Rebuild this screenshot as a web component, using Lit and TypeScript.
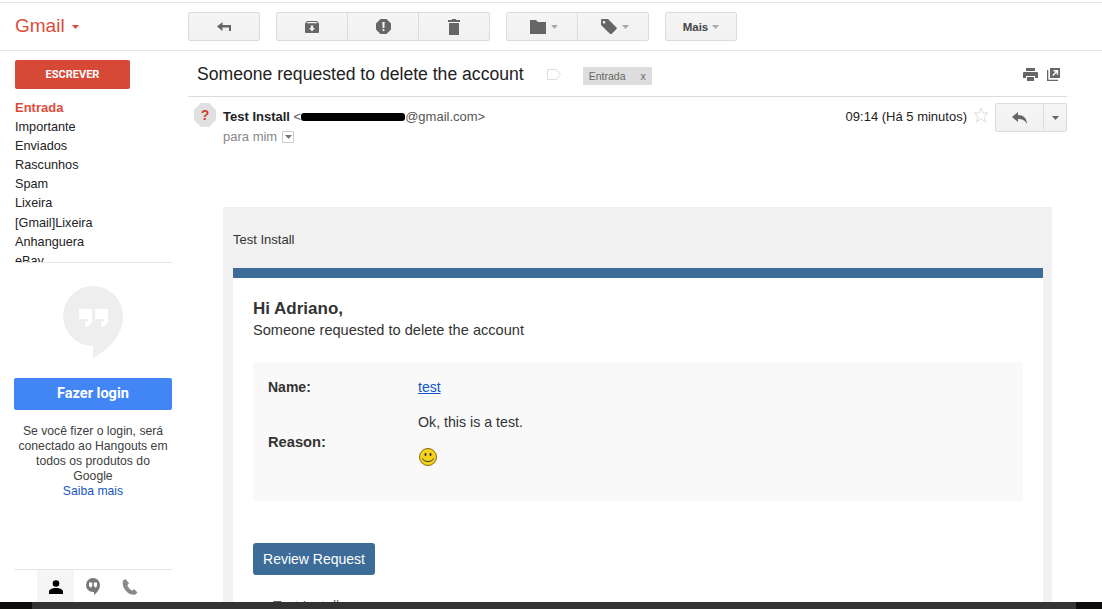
import { LitElement, html, css, svg } from 'lit';
import { customElement } from 'lit/decorators.js';

const caret = svg`<svg class="caret" width="7" height="4" viewBox="0 0 7 4"><path d="M0 0h7L3.5 4z" fill="currentColor"/></svg>`;

@customElement('app-root')
export class AppRoot extends LitElement {
  static styles = css`
    :host {
      display: block;
      width: 1102px;
      height: 609px;
      overflow: hidden;
      background: #fff;
      font-family: 'Liberation Sans', Arial, sans-serif;
      color: #222;
    }
    .page {
      height: 602px;
      box-sizing: border-box;
      padding-top: 2px;
      display: flex;
      flex-direction: column;
      overflow: hidden;
    }
    .strip {
      height: 7px;
      background: #333;
      display: flex;
      justify-content: space-between;
    }
    .strip i {
      background: #0c0c0a;
      width: 32px;
    }
    .strip i:last-child {
      width: 26px;
    }

    /* toolbar */
    .toolbar {
      height: 49px;
      flex: none;
      box-sizing: border-box;
      display: flex;
      align-items: flex-start;
      border-top: 1px solid #e5e5e5;
      border-bottom: 1px solid #e5e5e5;
    }
    .logo {
      width: 188px;
      padding: 11px 0 0 15px;
      box-sizing: border-box;
      color: #dd4b39;
      font-size: 19px;
      line-height: 24px;
      display: flex;
      align-items: center;
      gap: 7px;
    }
    .logo .caret {
      margin-top: 2px;
    }
    .tools {
      display: flex;
      gap: 16px;
      padding-top: 9px;
    }
    .group {
      display: flex;
      height: 29px;
      box-sizing: border-box;
      border: 1px solid #dcdcdc;
      border-radius: 2px;
      background: linear-gradient(#f5f5f5, #f1f1f1);
      color: #666;
    }
    .btn {
      display: flex;
      align-items: center;
      justify-content: center;
      gap: 5px;
      box-sizing: border-box;
      width: 71px;
      border-right: 1px solid #dcdcdc;
    }
    .btn:last-child {
      border-right: 0;
      width: 70px;
    }
    .btn .caret {
      color: #aaa;
    }
    .btn.menu {
      padding-left: 4px;
    }
    .more {
      font-size: 11.5px;
      font-weight: bold;
      color: #444;
      gap: 4px;
    }

    .body {
      flex: 1;
      min-height: 0;
      display: flex;
    }

    /* left column */
    .side {
      width: 188px;
      flex: none;
      box-sizing: border-box;
      display: flex;
      flex-direction: column;
    }
    .compose {
      margin: 9px 0 0 15px;
      width: 115px;
      height: 29px;
      border-radius: 2px;
      background: #d64937;
      color: #fff;
      font-size: 11px;
      font-weight: bold;
      font-family: Roboto, 'Liberation Sans', sans-serif;
      display: flex;
      align-items: center;
      justify-content: center;
    }
    .labels {
      margin: 9px 16px 0 15px;
      padding-top: 0.4px;
      height: 163.6px;
      overflow: hidden;
      border-bottom: 1px solid #e5e5e5;
      font-size: 12.7px;
      line-height: 19.2px;
      color: #222;
    }
    .labels div.on {
      color: #dd4b39;
      font-weight: bold;
      font-size: 13px;
    }
    .hang {
      display: flex;
      flex-direction: column;
      align-items: stretch;
      margin: 0 16px 0 14px;
      flex: 1;
      min-height: 0;
    }
    .bubble {
      align-self: center;
      margin-top: 23px;
    }
    .login {
      margin-top: 20px;
      height: 32px;
      background: #4285f4;
      color: #fff;
      font-size: 14.5px;
      font-weight: bold;
      border-radius: 2px;
      display: flex;
      align-items: center;
      justify-content: center;
      font-family: Roboto, 'Liberation Sans', sans-serif;
    }
    .hint {
      margin-top: 14px;
      font-size: 12.2px;
      line-height: 15px;
      text-align: center;
      color: #404040;
    }
    .hint a {
      color: #1a56c4;
      display: block;
    }
    .tabs {
      margin-top: auto;
      height: 33px;
      box-sizing: border-box;
      border-top: 1px solid #e5e5e5;
      display: flex;
      padding-left: 23px;
    }
    .tabs span {
      width: 37px;
      display: flex;
      align-items: center;
      justify-content: center;
      padding-top: 1px;
    }
    .tabs span.on {
      background: #f5f5f5;
    }

    /* message */
    .main {
      flex: 1;
      min-width: 0;
      padding-right: 35px;
    }
    .subject {
      height: 46px;
      box-sizing: border-box;
      border-bottom: 1px solid #dcdcdc;
      display: flex;
      align-items: center;
      padding: 2px 7px 0 9px;
      font-size: 17.6px;
      color: #222;
    }
    .tag {
      margin-left: 23px;
      color: #ddd;
      display: flex;
    }
    .chip {
      margin: 2px 0 0 22px;
      width: 69px;
      height: 18px;
      box-sizing: border-box;
      padding: 0 6px;
      background: #ddd;
      color: #666;
      font-size: 10.5px;
      display: flex;
      align-items: center;
      justify-content: space-between;
    }
    .subject-icons {
      margin-left: auto;
      display: flex;
      gap: 9px;
      color: #666;
    }
    .head {
      display: flex;
      height: 110px;
      box-sizing: border-box;
      padding: 6px 0 0 6px;
    }
    .avatar {
      width: 22px;
      height: 24px;
      flex: none;
      display: flex;
      justify-content: center;
    }
    .who {
      margin-left: 7px;
      font-size: 13px;
      color: #555;
      line-height: 16px;
      padding-top: 6px;
    }
    .who b {
      color: #222;
    }
    .mask {
      display: inline-block;
      width: 104px;
      height: 8px;
      background: #000;
      border-radius: 3px;
      vertical-align: 0;
    }
    .to {
      color: #888;
      margin-top: 4px;
      display: flex;
      align-items: center;
      gap: 5px;
    }
    .arrow {
      width: 12px;
      height: 12px;
      box-sizing: border-box;
      border: 1px solid #ccc;
      border-radius: 1px;
      display: flex;
      align-items: center;
      justify-content: center;
      color: #777;
    }
    .when {
      margin-left: auto;
      display: flex;
      gap: 6px;
      font-size: 13px;
      line-height: 16px;
      color: #222;
    }
    .when > span {
      padding-top: 6px;
    }
    .star {
      margin-top: 4px;
    }
    .reply {
      display: flex;
      height: 29px;
      box-sizing: border-box;
      border: 1px solid #dcdcdc;
      border-radius: 2px;
      background: linear-gradient(#f5f5f5, #f1f1f1);
      color: #666;
    }
    .reply > div {
      display: flex;
      align-items: center;
      justify-content: center;
    }
    .reply .a {
      box-sizing: border-box;
      width: 48px;
      border-right: 1px solid #dcdcdc;
    }
    .reply .b {
      width: 22px;
    }

    /* mail body */
    .mail {
      margin: 0 15px 0 35px;
      background: #f1f1f1;
      padding: 0 9px 0 10px;
      height: 400px;
    }
    .brand {
      height: 61px;
      box-sizing: border-box;
      padding-top: 25px;
      font-size: 13px;
      line-height: 15px;
      color: #333;
    }
    .card {
      background: #fff;
      border-top: 10px solid #3d6c99;
      padding: 20px;
      height: 400px;
      color: #333;
      font-size: 14px;
      line-height: 20px;
      box-sizing: border-box;
    }
    .card h2 {
      margin: 0;
      padding-top: 1px;
      font-size: 17px;
      line-height: 20px;
      font-weight: bold;
    }
    .card .lead {
      font-size: 14.6px;
      line-height: 22px;
    }
    .panel {
      margin-top: 21px;
      background: #f9f9f9;
      height: 139px;
      display: grid;
      grid-template-columns: 150px 1fr;
      padding: 15px;
      box-sizing: border-box;
      grid-template-rows: 20px auto;
    }
    .panel b {
      display: block;
    }
    .panel a {
      color: #1155cc;
      text-decoration: underline;
    }
    .panel .reason {
      align-self: center;
      font-size: 14.7px;
    }
    .panel p {
      margin: 15px 0 0;
      line-height: 20px;
      font-size: 14.2px;
    }
    .panel .smile {
      display: block;
      margin: 16px 0 0 1px;
    }
    .review {
      margin-top: 42px;
      width: 122px;
      height: 32px;
      background: #3d6c99;
      color: #fff;
      border-radius: 3px;
      display: flex;
      align-items: center;
      justify-content: center;
      font-size: 14px;
    }
    .foot {
      margin: 21px 0 0 20px;
      font-size: 14px;
      color: #666;
    }
  `;

  render() {
    const labels = ['Importante', 'Enviados', 'Rascunhos', 'Spam', 'Lixeira', '[Gmail]Lixeira', 'Anhanguera', 'eBay'];
    return html`
      <div class="page">
        <div class="toolbar">
          <div class="logo">Gmail ${caret}</div>
          <div class="tools">
            <div class="group">
              <div class="btn">
                <svg width="14" height="9" viewBox="0 0 14 9"><path d="M0 4.500 5.500 0v3H14v6h-2V5.500H5.500V9z" fill="#666"/></svg>
              </div>
            </div>
            <div class="group">
              <div class="btn">
                <svg width="14" height="12" viewBox="0 0 14 12"><path d="M2 0h10l2 2.500V11a1 1 0 0 1-1 1H1a1 1 0 0 1-1-1V2.500zM1.500 2.300h11L11.500 1h-9zM5.800 4.500v2.700H3.800L7 10.300l3.200-3.100h-2V4.500z" fill="#666" fill-rule="evenodd"/></svg>
              </div>
              <div class="btn">
                <svg width="15" height="15" viewBox="0 0 15 15"><path d="M4.500 0h6L15 4.500v6L10.500 15h-6L0 10.500v-6zM6.300 3l.3 6h1.800l.3-6zM7.500 10a1.100 1.100 0 1 0 0 2.200 1.100 1.100 0 0 0 0-2.200z" fill="#666" fill-rule="evenodd"/></svg>
              </div>
              <div class="btn">
                <svg width="12" height="16" viewBox="0 0 12 16"><path d="M4 0h4v1h4v2H0V1h4zM1 4h10v12H1z" fill="#666"/></svg>
              </div>
            </div>
            <div class="group">
              <div class="btn menu">
                <svg width="16" height="14" viewBox="0 0 16 14"><path d="M0 0h6l2 2h8v12H0z" fill="#666"/></svg>
                ${caret}
              </div>
              <div class="btn menu">
                <svg width="16" height="15" viewBox="0 0 16 15"><path d="M1 0h6l8.500 8.500a1 1 0 0 1 0 1.400l-5 5a1 1 0 0 1-1.400 0L0 6V1a1 1 0 0 1 1-1zM3 2a1.300 1.300 0 1 0 0 2.600A1.300 1.300 0 0 0 3 2z" fill="#666" fill-rule="evenodd"/></svg>
                ${caret}
              </div>
            </div>
            <div class="group">
              <div class="btn more">Mais ${caret}</div>
            </div>
          </div>
        </div>
        <div class="body">
          <div class="side">
            <div class="compose">ESCREVER</div>
            <div class="labels">
              <div class="on">Entrada</div>
              ${labels.map(l => html`<div>${l}</div>`)}
            </div>
            <div class="hang">
              <svg class="bubble" width="60" height="72" viewBox="0 0 60 72">
                <path d="M30 0a30 30 0 0 1 30 30c0 20-14 33-30 42V60A30 30 0 0 1 30 0z" fill="#eee"/>
                <path d="M16 23h13v11c0 4-3 6.500-7 7v-5c2-.5 3-1 3-3h-9zM32 23h13v11c0 4-3 6.500-7 7v-5c2-.5 3-1 3-3h-9z" fill="#fff"/>
              </svg>
              <div class="login">Fazer login</div>
              <div class="hint">
                Se você fizer o login, será<br />conectado ao Hangouts em<br />todos os produtos do<br />Google
                <a>Saiba mais</a>
              </div>
              <div class="tabs">
                <span class="on">
                  <svg width="14" height="14" viewBox="0 0 14 14"><circle cx="7" cy="3.500" r="3.300"/><path d="M0 14v-2.500C0 9.500 3.500 8 7 8s7 1.500 7 3.500V14z"/></svg>
                </span>
                <span>
                  <svg width="14" height="18" viewBox="0 0 14 18"><path d="M7 0a7 7 0 0 1 7 7c0 4.500-3.500 8-6 10v-3H7A7 7 0 0 1 7 0z" fill="#777"/><path d="M3 4.500h3.200v3c0 1.300-.8 2-2 2.300V8.500H3zM7.800 4.500H11v3c0 1.300-.8 2-2 2.300V8.500H7.800z" fill="#fff"/></svg>
                </span>
                <span>
                  <svg width="16" height="16" viewBox="0 0 16 16"><path d="M3.500 0 1 1.500C0 5 1 8.500 4 12c2.500 2.800 5.500 4 9 3.800l2.500-2.300-3.200-3.300-2.300 1.300C8 10.500 6 8.200 5.300 6.200L7 4.300z" fill="#8a8a8a"/></svg>
                </span>
              </div>
            </div>
          </div>
          <div class="main">
            <div class="subject">
              Someone requested to delete the account
              <span class="tag">
                <svg width="14" height="11" viewBox="0 0 14 11"><path d="M.5.500h9l4 5-4 5h-9z" fill="none" stroke="currentColor"/></svg>
              </span>
              <span class="chip"><span>Entrada</span><span>x</span></span>
              <span class="subject-icons">
                <svg width="15" height="13" viewBox="0 0 15 13"><path d="M3 0h9v3H3zM1 4h13a1 1 0 0 1 1 1v5h-3V8H3v2H0V5a1 1 0 0 1 1-1zM4 9h7v4H4z" fill="#666"/></svg>
                <svg width="13" height="13" viewBox="0 0 13 13"><path d="M3 0h10v10H3zM6.500 2v1.500h2.200L5.300 6.900l1 1 3.400-3.400v2.200h1.500V2z" fill="#666" fill-rule="evenodd"/><path d="M0 2h1.300v9.700H11V13H0z" fill="#666"/></svg>
              </span>
            </div>
            <div class="head">
              <div class="avatar">
                <svg width="22" height="24" viewBox="0 0 22 24">
                  <path d="M7 0h8l7 7v10l-7 7H7l-7-7V7z" fill="#e0e0e0"/>
                  <text x="11" y="17" text-anchor="middle" font-size="14" font-weight="bold" fill="#d23f31" font-family="Liberation Sans">?</text>
                </svg>
              </div>
              <div class="who">
                <div><b>Test Install</b> &lt;<span class="mask"></span>@gmail.com&gt;</div>
                <div class="to">para mim
                  <span class="arrow"><svg width="7" height="4" viewBox="0 0 7 4"><path d="M0 0h7L3.500 4z" fill="currentColor"/></svg></span>
                </div>
              </div>
              <div class="when">
                <span>09:14 (Há 5 minutos)</span>
                <svg class="star" width="16" height="16" viewBox="0 0 16 16"><path d="m8 1 2 5h5l-4 3.500L12.500 15 8 11.800 3.500 15 5 9.500 1 6h5z" fill="none" stroke="#ddd"/></svg>
                <div class="reply">
                  <div class="a"><svg width="16" height="12" viewBox="0 0 16 12"><path d="M6 0 0 5l6 5V7c4 0 7 1 9 5 0-6-4-9-9-9z" fill="#666"/></svg></div>
                  <div class="b">${caret}</div>
                </div>
              </div>
            </div>
            <div class="mail">
              <div class="brand">Test Install</div>
              <div class="card">
                <h2>Hi Adriano,</h2>
                <div class="lead">Someone requested to delete the account</div>
                <div class="panel">
                  <b>Name:</b>
                  <a>test</a>
                  <b class="reason">Reason:</b>
                  <div>
                    <p>Ok, this is a test.</p>
                    <svg class="smile" width="18" height="18" viewBox="0 0 18 18">
                      <circle cx="9" cy="9" r="8.500" fill="#f7d21c" stroke="#8a6a10"/>
                      <ellipse cx="6.500" cy="6.500" rx="1" ry="1.700" fill="#333"/>
                      <ellipse cx="11.500" cy="6.500" rx="1" ry="1.700" fill="#333"/>
                      <path d="M3.500 10.500c1.500 4 9.500 4 11 0" fill="none" stroke="#333"/>
                    </svg>
                  </div>
                </div>
                <div class="review">Review Request</div>
                <div class="foot">Test Install</div>
              </div>
            </div>
          </div>
        </div>
      </div>
      <div class="strip"><i></i><i></i></div>
    `;
  }
}
